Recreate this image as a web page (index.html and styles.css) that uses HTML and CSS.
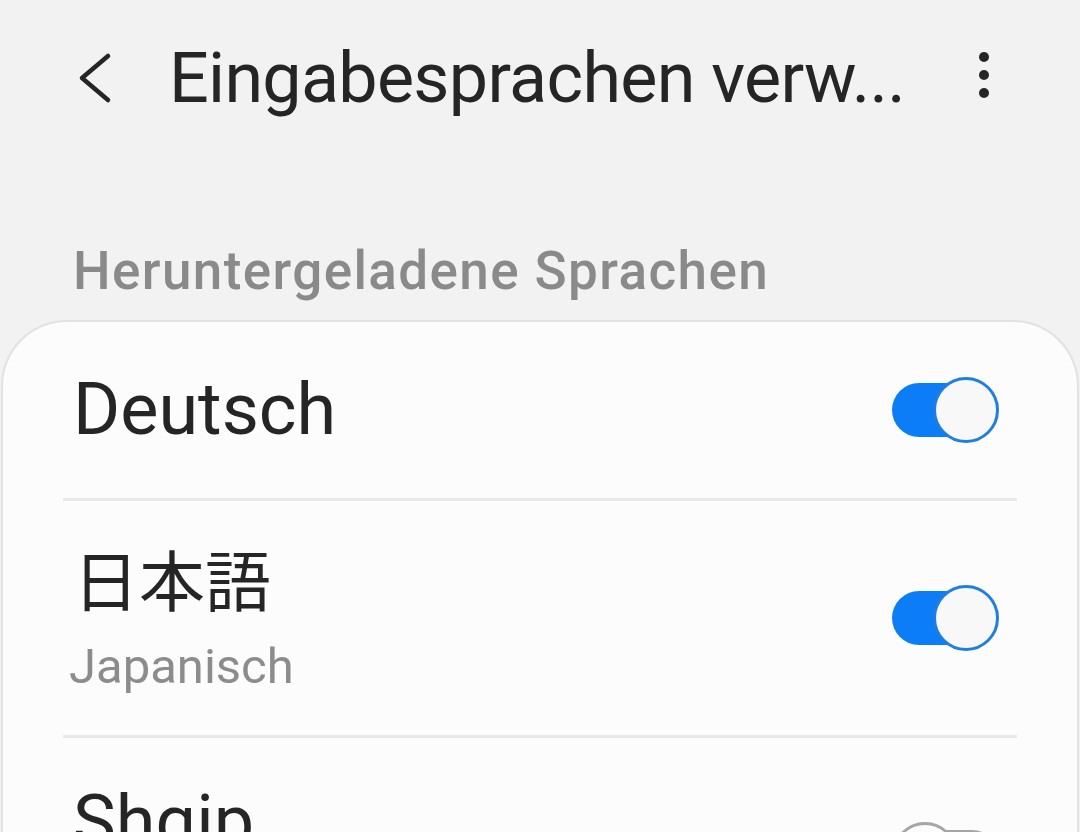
FILE: index.html
```html
<!DOCTYPE html>
<html lang="de">
<head>
  <meta charset="UTF-8" />
  <meta name="viewport" content="width=device-width, initial-scale=1.0"/>
  <title>Eingabesprachen verwalten</title>
  <link rel="stylesheet" href="styles.css">
</head>
<body>
  <header class="appbar">
    <button class="back" aria-label="Zurück">
      <svg width="40" height="52" viewBox="0 0 40 52"><path d="M32 4 L6 26 L32 48" fill="none" stroke="#252525" stroke-width="4.5" stroke-linecap="round" stroke-linejoin="round"/></svg>
    </button>
    <h1 class="title">Eingabesprachen verw...</h1>
    <button class="more" aria-label="Mehr">
      <span></span><span></span><span></span>
    </button>
  </header>

  <h2 class="section-title">Heruntergeladene Sprachen</h2>

  <div class="card">
    <div class="row">
      <div class="label">
        <div class="name">Deutsch</div>
      </div>
      <div class="switch on"><span class="track"></span><span class="thumb"></span></div>
    </div>

    <div class="row tall">
      <div class="label">
        <div class="name cjk">日本語</div>
        <div class="sub">Japanisch</div>
      </div>
      <div class="switch on"><span class="track"></span><span class="thumb"></span></div>
    </div>

    <div class="row tall">
      <div class="label">
        <div class="name">Shqip</div>
        <div class="sub">Albanisch</div>
      </div>
      <div class="switch"><span class="track"></span><span class="thumb"></span></div>
    </div>
  </div>
</body>
</html>
```

FILE: styles.css
```css
body {
  font-family: Roboto, "Noto Sans", sans-serif;
  margin: 0; padding: 0;
  background-color: #f2f2f2;
  color: #252525;
  height: 832px;
  overflow: hidden;
}
button {
  background: none;
  border: none;
  padding: 0;
  cursor: pointer;
}
.appbar {
  display: flex;
  align-items: center;
  height: 156px;
}
.back {
  width: 40px;
  height: 52px;
  margin-left: 76px;
  margin-right: 53px;
}
.title {
  flex: 1;
  margin: 0;
  font-size: 70px;
  font-weight: 400;
  line-height: 1;
  letter-spacing: -0.7px;
  white-space: nowrap;
}
.more {
  display: flex;
  flex-direction: column;
  align-items: center;
  gap: 8px;
  width: 20px;
  margin-right: 86px;
  margin-top: -6px;
}
.more span {
  width: 10px;
  height: 10px;
  border-radius: 50%;
  background: #252525;
}
.section-title {
  margin: 89px 0 22px 73px;
  font-size: 53px;
  font-weight: 500;
  line-height: 1;
  letter-spacing: 1.4px;
  color: #8a8a8a;
}
.card {
  margin: 0 1px;
  background: #fcfcfc;
  border: 2px solid #e2e2e2;
  border-bottom: none;
  border-radius: 66px 66px 0 0;
  padding: 0 60px;
}
.row {
  display: flex;
  align-items: center;
  justify-content: space-between;
  height: 176px;
  border-bottom: 3px solid #e8e8e8;
}
.row.tall {
  height: 234px;
}
.label {
  padding-left: 10px;
}
.row.tall .label {
  align-self: flex-start;
  padding-top: 36px;
}
.name {
  font-size: 72px;
  line-height: 1;
}
.row.tall .name {
  line-height: 96px;
}
.row.tall .name.cjk {
  font-family: "Noto Sans CJK JP", sans-serif;
  font-size: 66px;
  line-height: 80px;
}
.sub {
  margin-top: 19px;
  margin-left: -4px;
  font-size: 49px;
  line-height: 62px;
  color: #8c8c8c;
}
.switch {
  position: relative;
  width: 107px;
  height: 66px;
  margin-right: 18px;
}
.switch .track {
  position: absolute;
  left: 0; top: 6px;
  width: 84px;
  height: 54px;
  border-radius: 27px;
  background: #0b7df7;
}
.switch .thumb {
  position: absolute;
  right: 0; top: 0;
  width: 60px;
  height: 60px;
  border-radius: 50%;
  border: 3px solid #1f7fe0;
  background: #f8f8f8;
}
.switch:not(.on) .track {
  left: 20px;
  top: 8px;
  height: 46px;
  width: 80px;
  background: transparent;
  border: 3px solid #a6a6a6;
}
.switch:not(.on) .thumb {
  left: 0;
  right: auto;
  border-color: #a6a6a6;
  background: #fcfcfc;
}
```
